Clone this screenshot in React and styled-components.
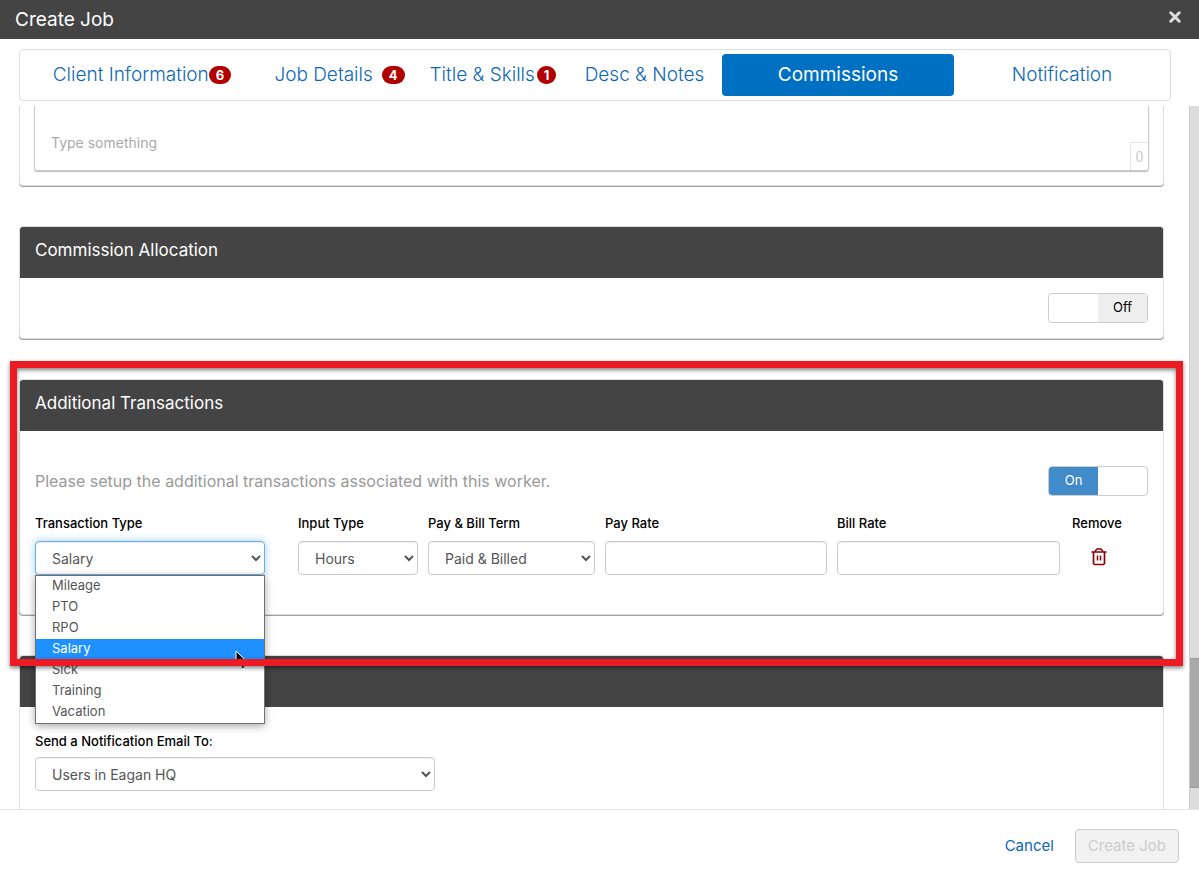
import { useState } from 'react';
import styled, { createGlobalStyle, css } from 'styled-components';

const GlobalStyle = createGlobalStyle`
    *, *::before, *::after {
        box-sizing: border-box;
    }
    body {
        margin: 0;
        background-color: #ffffff;
        color: #000000;
        font-family: Inter, "Liberation Sans", sans-serif;
        font-size: 13px;
        line-height: 20px;
    }
    button, input, select, textarea {
        font-family: inherit;
    }
`;

const Modal = styled.div`
    height: 100vh;
    display: flex;
    flex-direction: column;
    overflow: hidden;
`;

const Header = styled.header`
    height: 39px;
    flex-shrink: 0;
    padding: 0 15px;
    display: flex;
    align-items: center;
    justify-content: space-between;
    background-color: #444444;
    color: white;
`;

const ModalTitle = styled.h1`
    margin: 0;
    font-size: 19px;
    font-weight: 400;
`;

const CloseButton = styled.button`
    width: 18px;
    height: 18px;
    margin-bottom: 6px;
    padding: 0;
    border: none;
    background: none;
    color: #dddddd;
    display: flex;
    align-items: center;
    justify-content: center;
    cursor: pointer;
`;

const TabBar = styled.nav`
    flex-shrink: 0;
    height: 52px;
    margin: 10px 28px 5px 19px;
    padding: 4px;
    border: 1px solid #dddddd;
    border-radius: 4px;
    display: grid;
    grid-template-columns: 236fr 151fr 148fr 147fr 232fr 208fr;
    gap: 4px;
`;

const Tab = styled.a`
    display: flex;
    align-items: center;
    justify-content: center;
    gap: ${props => props.$gap || 0}px;
    border-radius: 4px;
    font-size: 19px;
    font-weight: 300;
    white-space: nowrap;
    text-decoration: none;
    color: #0d68b5;
    ${props => props.$active && css`
        background-color: #0070c3;
        color: white;
        font-weight: 400;
    `}
`;

const Badge = styled.span`
    height: 18px;
    padding: 0 7px;
    border-radius: 10px;
    background-color: #b00000;
    color: white;
    font-size: 13px;
    font-weight: 700;
    line-height: 18px;
`;

const Body = styled.div`
    flex: 1;
    min-height: 0;
    display: flex;
`;

const Content = styled.main`
    flex: 1;
    min-width: 0;
    padding: 0 25px 0 19px;
    overflow: hidden;
    display: flex;
    flex-direction: column;
    gap: 40px;
`;

const ScrollTrack = styled.div`
    width: 10px;
    display: flex;
    flex-direction: column;
    justify-content: flex-end;
    padding-bottom: 21px;
    background-color: #dddddd;
    border-left: 1px solid #cccccc;
`;

const ScrollThumb = styled.div`
    height: 130px;
    background-color: #a9a9a9;
    border: 1px solid #999999;
    border-width: 1px 0;
`;

const Panel = styled.section`
    flex-shrink: 0;
    position: relative;
    border: 1px solid #dddddd;
    border-radius: 4px;
    background-color: white;
    box-shadow: 0 1px 0 #a0a0a0;
    ${props => props.$cut && css`
        border-top: none;
        border-top-left-radius: 0;
        border-top-right-radius: 0;
    `}
`;

const PanelHead = styled.h2`
    height: 51px;
    margin: 0;
    padding: 13px 15px;
    border-radius: 3px 3px 0 0;
    background-color: #444444;
    color: white;
    font-size: 17px;
    font-weight: 400;
    line-height: 20px;
`;

const PanelBody = styled.div`
    padding: ${props => props.$padding || '15px'};
`;

const Editor = styled.div`
    display: flex;
    align-items: flex-end;
    height: 65px;
    border: 1px solid #cccccc;
    border-top: none;
    border-radius: 0 0 3px 3px;
    box-shadow: 0 1px 1px #bbbbbb;
`;

const EditorInput = styled.textarea`
    flex: 1;
    height: 64px;
    padding: 27px 16px 0;
    border: none;
    outline: none;
    resize: none;
    background: transparent;
    font-size: 14px;
    line-height: 20px;
    &::placeholder {
        color: #aaaaaa;
    }
`;

const Counter = styled.span`
    width: 18px;
    height: 28px;
    border: 1px solid #e4e4e4;
    border-width: 1px 0 0 1px;
    color: #cccccc;
    font-family: Roboto, sans-serif;
    font-size: 14px;
    line-height: 28px;
    text-align: center;
`;

const Row = styled.div`
    display: flex;
    align-items: center;
    justify-content: ${props => props.$end ? 'flex-end' : 'space-between'};
`;

const Hint = styled.p`
    margin: 0;
    color: #999999;
    font-size: 16px;
`;

const Switch = styled.button`
    width: 100px;
    height: 30px;
    padding: 0;
    display: flex;
    overflow: hidden;
    border: 1px solid #cccccc;
    border-radius: 4px;
    background-color: white;
    font-size: 13px;
    cursor: pointer;
`;

const SwitchHalf = styled.span`
    flex: 1;
    height: 28px;
    line-height: 27px;
    text-align: center;
    ${props => props.$tone === 'on' && css`
        background-color: #428bca;
        color: white;
    `}
    ${props => props.$tone === 'off' && css`
        background-color: #eeeeee;
        color: #000000;
    `}
`;

const Fields = styled.div`
    display: grid;
    grid-template-columns: 253fr 120fr 167fr 222fr 223fr 78fr;
    gap: 10px;
    margin-top: 17px;
`;

const Field = styled.div`
    min-width: 0;
    display: flex;
    flex-direction: column;
    gap: ${props => props.$gap || 8}px;
    padding-right: ${props => props.$after || 0}px;
`;

const Label = styled.label`
    font-size: 13px;
    font-weight: 500;
    white-space: nowrap;
`;

const control = css`
    width: 100%;
    height: 34px;
    padding: 6px 12px;
    border: 1px solid #cccccc;
    border-radius: 4px;
    outline: none;
    background-color: white;
    box-shadow: inset 0 1px 1px rgba(0, 0, 0, 0.075);
    color: #555555;
    font-size: 14px;
`;

const Input = styled.input`
    ${control}
`;

const Select = styled.select`
    ${control}
    padding: 0 1px 0 12px;
    ${props => props.$open && css`
        border-color: #66afe9;
        box-shadow: inset 0 1px 1px rgba(0, 0, 0, 0.075), 0 0 8px rgba(102, 175, 233, 0.6);
    `}
`;

const SelectWrap = styled.div`
    position: relative;
    max-width: ${props => props.$max || 'none'};
`;

const Menu = styled.ul`
    position: absolute;
    z-index: 2;
    top: 100%;
    left: 0;
    right: 0;
    margin: 0;
    padding: 0;
    list-style: none;
    border: 1px solid #707070;
    background-color: white;
    box-shadow: 0 2px 8px rgba(0, 0, 0, 0.35);
`;

const MenuItem = styled.li`
    height: 21px;
    padding: 0 16px;
    font-size: 13px;
    line-height: 18px;
    color: ${props => props.$selected ? 'white' : '#555555'};
    background-color: ${props => props.$selected ? '#1e90ff' : 'transparent'};
`;

const Pointer = styled.svg`
    position: absolute;
    z-index: 3;
    top: 109px;
    right: 17px;
    width: 13px;
    height: 20px;
`;

const RemoveField = styled(Field)`
    padding-left: 2px;
`;

const RemoveButton = styled.button`
    width: 54px;
    height: 34px;
    padding: 0 0 2px;
    border: none;
    background: none;
    color: #8b0000;
    display: flex;
    align-items: center;
    justify-content: center;
    cursor: pointer;
`;

// red frame laid over the section, reaching into the gaps around it
const Callout = styled.div`
    position: absolute;
    z-index: 4;
    top: -19px;
    right: -20px;
    bottom: -52px;
    left: -10px;
    border: 7px solid #ed1c24;
    filter: drop-shadow(0 2px 2px rgba(0, 0, 0, 0.5));
    pointer-events: none;
`;

const Footer = styled.footer`
    flex-shrink: 0;
    height: 83px;
    padding: 19px 20px;
    border-top: 1px solid #e5e5e5;
    display: flex;
    align-items: flex-start;
    justify-content: flex-end;
    gap: 8px;
`;

const FooterButton = styled.button`
    height: 34px;
    padding: 0 12px 1px;
    border: 1px solid transparent;
    border-radius: 4px;
    background: none;
    color: #0d68b5;
    font-size: 15px;
    cursor: pointer;
    &:disabled {
        border-color: #cccccc;
        background-color: #f2f2f2;
        color: #cccccc;
        cursor: default;
    }
`;

const tabs = [
    { name: 'Client Information', count: 6 },
    { name: 'Job Details', count: 4, gap: 9 },
    { name: 'Title & Skills', count: 1, gap: 2 },
    { name: 'Desc & Notes' },
    { name: 'Commissions', active: true },
    { name: 'Notification' },
];

const transactionTypes = ['Mileage', 'PTO', 'RPO', 'Salary', 'Sick', 'Training', 'Vacation'];

const OnOff = ({ label, initial }) => {
  const [on, setOn] = useState(initial);
  return (
    <Switch type="button" role="switch" aria-checked={on} aria-label={label} onClick={() => setOn(!on)}>
        <SwitchHalf $tone={on ? 'on' : ''}>{on ? 'On' : ''}</SwitchHalf>
        <SwitchHalf $tone={on ? '' : 'off'}>{on ? '' : 'Off'}</SwitchHalf>
    </Switch>
  );
};

const TransactionType = () => {
  const [type, setType] = useState('Salary');
  return (
    <Field $after={23}>
        <Label htmlFor="transaction-type">Transaction Type</Label>
        <SelectWrap>
            <Select id="transaction-type" $open value={type} onChange={e => setType(e.target.value)}>
                {transactionTypes.map(item => <option key={item}>{item}</option>)}
            </Select>
            <Menu>
                {transactionTypes.map(item => (
                    <MenuItem key={item} $selected={item === type} onClick={() => setType(item)}>{item}</MenuItem>
                ))}
            </Menu>
            <Pointer viewBox="0 0 13 20" aria-hidden="true">
                <path d="M1 1v15l3.5-3.4 2.6 6 2.6-1.1-2.6-5.8H12z" fill="#000" stroke="#fff" strokeWidth="1" />
            </Pointer>
        </SelectWrap>
    </Field>
  );
};

const App = () => {
  return (
    <Modal>
        <GlobalStyle />
        <Header>
            <ModalTitle>Create Job</ModalTitle>
            <CloseButton type="button" aria-label="Close">
                <svg width="12" height="12" viewBox="0 0 12 12" aria-hidden="true">
                    <path d="M1.8 1.8l8.4 8.4M10.2 1.8l-8.4 8.4" stroke="currentColor" strokeWidth="3" strokeLinecap="round" />
                </svg>
            </CloseButton>
        </Header>
        <TabBar>
            {tabs.map(tab => (
                <Tab key={tab.name} href="#" $active={tab.active} $gap={tab.gap}>
                    {tab.name}
                    {tab.count && <Badge>{tab.count}</Badge>}
                </Tab>
            ))}
        </TabBar>
        <Body>
            <Content>
                <Panel $cut>
                    <PanelBody $padding="0 14px 14px">
                        <Editor>
                            <EditorInput aria-label="Comments" placeholder="Type something" />
                            <Counter>0</Counter>
                        </Editor>
                    </PanelBody>
                </Panel>
                <Panel>
                    <PanelHead>Commission Allocation</PanelHead>
                    <PanelBody>
                        <Row $end>
                            <OnOff label="Commission Allocation" initial={false} />
                        </Row>
                    </PanelBody>
                </Panel>
                <Panel>
                    <PanelHead>Additional Transactions</PanelHead>
                    <PanelBody $padding="35px 15px 39px">
                        <Row>
                            <Hint>Please setup the additional transactions associated with this worker.</Hint>
                            <OnOff label="Additional Transactions" initial />
                        </Row>
                        <Fields>
                            <TransactionType />
                            <Field>
                                <Label htmlFor="input-type">Input Type</Label>
                                <Select id="input-type">
                                    <option>Hours</option>
                                </Select>
                            </Field>
                            <Field>
                                <Label htmlFor="term">Pay &amp; Bill Term</Label>
                                <Select id="term">
                                    <option>Paid &amp; Billed</option>
                                </Select>
                            </Field>
                            <Field>
                                <Label htmlFor="pay-rate">Pay Rate</Label>
                                <Input id="pay-rate" type="text" />
                            </Field>
                            <Field>
                                <Label htmlFor="bill-rate">Bill Rate</Label>
                                <Input id="bill-rate" type="text" />
                            </Field>
                            <RemoveField>
                                <Label htmlFor="remove">Remove</Label>
                                <RemoveButton id="remove" type="button">
                                    <svg width="16" height="18" viewBox="0 0 16 18" fill="none" stroke="currentColor" aria-hidden="true">
                                        <path d="M0.5 4h15M4.5 4V2.5L6 1h4l1.5 1.5V4" strokeWidth="1.5" />
                                        <path d="M2.5 4v11.5L3.5 16.5h9l1-1V4" strokeWidth="1.7" />
                                        <path d="M6.5 7.5v5M9.5 7.5v5" strokeWidth="1.5" />
                                    </svg>
                                </RemoveButton>
                            </RemoveField>
                        </Fields>
                    </PanelBody>
                    <Callout />
                </Panel>
                <Panel>
                    <PanelHead aria-label="Notification" />
                    <PanelBody $padding="24px 15px 30px">
                        <Field $gap={6}>
                            <Label htmlFor="notify">Send a Notification Email To:</Label>
                            <SelectWrap $max="400px">
                                <Select id="notify">
                                    <option>Users in Eagan HQ</option>
                                </Select>
                            </SelectWrap>
                        </Field>
                    </PanelBody>
                </Panel>
            </Content>
            <ScrollTrack>
                <ScrollThumb />
            </ScrollTrack>
        </Body>
        <Footer>
            <FooterButton type="button">Cancel</FooterButton>
            <FooterButton type="submit" disabled>Create Job</FooterButton>
        </Footer>
    </Modal>
  );
};

export default App;
